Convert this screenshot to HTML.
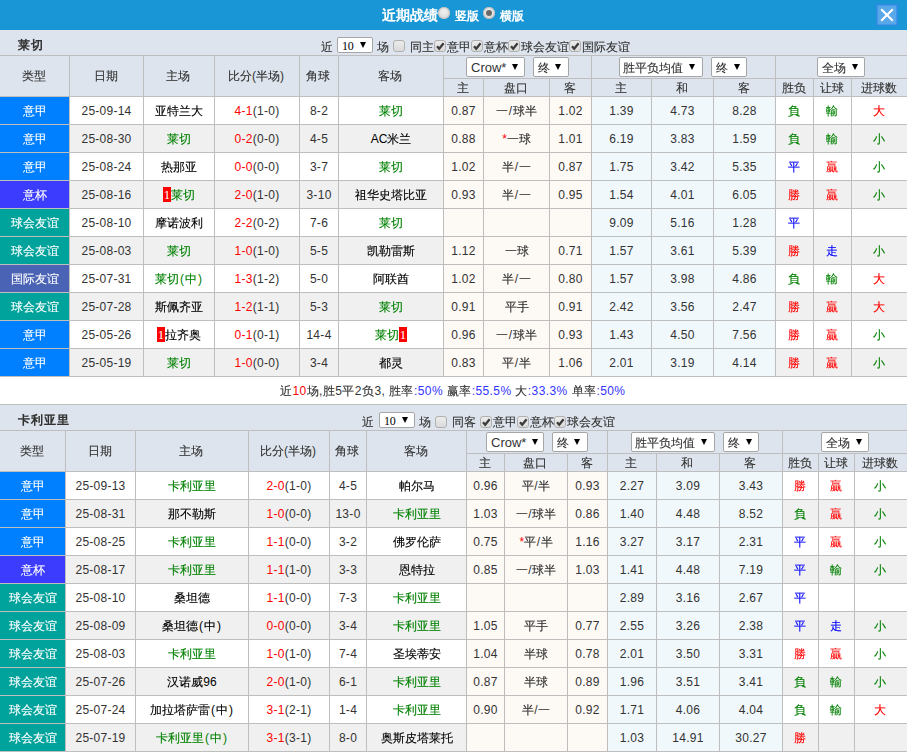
<!DOCTYPE html>
<html><head><meta charset="utf-8"><style>
html,body{margin:0;padding:0;width:907px;height:752px;overflow:hidden;background:#fff}
body{position:relative;font-family:"Liberation Sans", sans-serif;font-size:12px}
body>div{position:absolute}
.rc{display:inline-block;background:#f00;color:#fff;font-family:'Liberation Serif';width:8px;height:15px;line-height:16px;text-align:center;vertical-align:top;position:relative;top:5px;font-size:13px}
.k{filter:url(#th)}
</style></head><body>
<svg width="0" height="0" style="position:absolute"><filter id="th" x="0" y="0" width="100%" height="100%"><feComponentTransfer><feFuncA type="gamma" amplitude="1" exponent="0.75" offset="0"/></feComponentTransfer></filter></svg>
<div style="left:0px;top:0px;width:907px;height:30px;background:#1996d5"></div><div style="left:382px;top:0px;width:200px;height:30px;color:#fff;line-height:30px;white-space:nowrap;font-weight:bold;font-size:14px"><span class="k">近期战绩</span></div><div style="left:438px;top:7px;width:12px;height:12px;border-radius:50%;background:radial-gradient(circle at 50% 40%,#f2f2f2,#d0d0d0);box-shadow:inset 0 0 0 1px #bdbdbd"></div><div style="left:455px;top:2px;width:200px;height:28px;color:#fff;line-height:28px;white-space:nowrap;font-weight:bold"><span class="k">竖版</span></div><div style="left:483px;top:7px;width:12px;height:12px;border-radius:50%;background:radial-gradient(circle at 50% 40%,#f2f2f2,#d0d0d0);box-shadow:inset 0 0 0 1px #bdbdbd"><div style="position:absolute;left:3px;top:3px;width:6px;height:6px;border-radius:50%;background:#6a6a6a"></div></div><div style="left:500px;top:2px;width:200px;height:28px;color:#fff;line-height:28px;white-space:nowrap;font-weight:bold"><span class="k">横版</span></div><div style="left:876px;top:4px;width:22px;height:22px;background:#5aa8ea;box-shadow:inset 0 0 0 1.6px #2f8ae4"><svg width="22" height="22" style="position:absolute;left:0;top:0"><path d="M5.2 5.2 L16.8 16.8 M16.8 5.2 L5.2 16.8" stroke="#fff" stroke-width="2.1"/></svg></div><div style="left:0px;top:30px;width:907px;height:25px;background:#dde4ed"></div><div style="left:18px;top:33px;width:200px;height:25px;color:#333;line-height:25px;white-space:nowrap;font-weight:bold;letter-spacing:1px"><span class="k">莱切</span></div><div style="left:321px;top:35px;width:200px;height:25px;color:#333;line-height:25px;white-space:nowrap;"><span class="k">近</span></div><div style="left:337px;top:37px;width:36px;height:16px;background:#fff;border:1px solid #a6a6a6;border-radius:2px;box-sizing:border-box"></div><div style="left:342px;top:38px;width:200px;height:16px;color:#333;line-height:16px;white-space:nowrap;"><span style="font-family:'Liberation Serif';font-size:12px;letter-spacing:-0.3px;color:#000">10</span></div><div style="left:360px;top:42px;width:0px;height:0px;border-left:3px solid transparent;border-right:3px solid transparent;border-top:6px solid #000"></div><div style="left:377px;top:35px;width:200px;height:25px;color:#333;line-height:25px;white-space:nowrap;"><span class="k">场</span></div><div style="left:393px;top:40px;width:12px;height:12px;background:linear-gradient(#ececec,#dadada);border:1px solid #b0b0b0;border-radius:3px;box-sizing:border-box"></div><div style="left:410px;top:35px;width:200px;height:25px;color:#333;line-height:25px;white-space:nowrap;"><span class="k">同主</span></div><div style="left:434px;top:40px;width:12px;height:12px;background:linear-gradient(#ececec,#dadada);border:1px solid #b0b0b0;border-radius:3px;box-sizing:border-box"><svg width="12" height="12" style="position:absolute;left:-1px;top:-1px"><path d="M3 6.3 L5.2 8.8 L9.6 3.2" stroke="#3c3c3c" stroke-width="2.3" fill="none"/></svg></div><div style="left:447px;top:35px;width:200px;height:25px;color:#333;line-height:25px;white-space:nowrap;"><span class="k">意甲</span></div><div style="left:471px;top:40px;width:12px;height:12px;background:linear-gradient(#ececec,#dadada);border:1px solid #b0b0b0;border-radius:3px;box-sizing:border-box"><svg width="12" height="12" style="position:absolute;left:-1px;top:-1px"><path d="M3 6.3 L5.2 8.8 L9.6 3.2" stroke="#3c3c3c" stroke-width="2.3" fill="none"/></svg></div><div style="left:484px;top:35px;width:200px;height:25px;color:#333;line-height:25px;white-space:nowrap;"><span class="k">意杯</span></div><div style="left:508px;top:40px;width:12px;height:12px;background:linear-gradient(#ececec,#dadada);border:1px solid #b0b0b0;border-radius:3px;box-sizing:border-box"><svg width="12" height="12" style="position:absolute;left:-1px;top:-1px"><path d="M3 6.3 L5.2 8.8 L9.6 3.2" stroke="#3c3c3c" stroke-width="2.3" fill="none"/></svg></div><div style="left:521px;top:35px;width:200px;height:25px;color:#333;line-height:25px;white-space:nowrap;"><span class="k">球会友谊</span></div><div style="left:569px;top:40px;width:12px;height:12px;background:linear-gradient(#ececec,#dadada);border:1px solid #b0b0b0;border-radius:3px;box-sizing:border-box"><svg width="12" height="12" style="position:absolute;left:-1px;top:-1px"><path d="M3 6.3 L5.2 8.8 L9.6 3.2" stroke="#3c3c3c" stroke-width="2.3" fill="none"/></svg></div><div style="left:582px;top:35px;width:200px;height:25px;color:#333;line-height:25px;white-space:nowrap;"><span class="k">国际友谊</span></div><div style="left:0px;top:55px;width:907px;height:41px;background:#dde4ed"></div><div style="left:0px;top:56px;width:68px;height:40px;color:#333;line-height:40px;text-align:center;white-space:nowrap;"><span class="k">类型</span></div><div style="left:69px;top:56px;width:73px;height:40px;color:#333;line-height:40px;text-align:center;white-space:nowrap;"><span class="k">日期</span></div><div style="left:143px;top:56px;width:70px;height:40px;color:#333;line-height:40px;text-align:center;white-space:nowrap;"><span class="k">主场</span></div><div style="left:214px;top:56px;width:84px;height:40px;color:#333;line-height:40px;text-align:center;white-space:nowrap;"><span class="k">比分</span>(<span class="k">半场</span>)</div><div style="left:299px;top:56px;width:38px;height:40px;color:#333;line-height:40px;text-align:center;white-space:nowrap;"><span class="k">角球</span></div><div style="left:338px;top:56px;width:104px;height:40px;color:#333;line-height:40px;text-align:center;white-space:nowrap;"><span class="k">客场</span></div><div style="left:443px;top:80px;width:39px;height:17px;color:#333;line-height:17px;text-align:center;white-space:nowrap;"><span class="k">主</span></div><div style="left:483px;top:80px;width:65px;height:17px;color:#333;line-height:17px;text-align:center;white-space:nowrap;"><span class="k">盘口</span></div><div style="left:549px;top:80px;width:41px;height:17px;color:#333;line-height:17px;text-align:center;white-space:nowrap;"><span class="k">客</span></div><div style="left:591px;top:80px;width:59px;height:17px;color:#333;line-height:17px;text-align:center;white-space:nowrap;"><span class="k">主</span></div><div style="left:651px;top:80px;width:61px;height:17px;color:#333;line-height:17px;text-align:center;white-space:nowrap;"><span class="k">和</span></div><div style="left:713px;top:80px;width:61px;height:17px;color:#333;line-height:17px;text-align:center;white-space:nowrap;"><span class="k">客</span></div><div style="left:775px;top:80px;width:37px;height:17px;color:#333;line-height:17px;text-align:center;white-space:nowrap;"><span class="k">胜负</span></div><div style="left:813px;top:80px;width:37px;height:17px;color:#333;line-height:17px;text-align:center;white-space:nowrap;"><span class="k">让球</span></div><div style="left:851px;top:80px;width:55px;height:17px;color:#333;line-height:17px;text-align:center;white-space:nowrap;"><span class="k">进球数</span></div><div style="left:0px;top:97px;width:907px;height:27px;background:#ffffff"></div><div style="left:0px;top:97px;width:69px;height:27px;background:#0080ff"></div><div style="left:444px;top:97px;width:147px;height:27px;background:#fdf9f5"></div><div style="left:592px;top:97px;width:183px;height:27px;background:#f0f8fc"></div><div style="left:0px;top:98px;width:69px;height:27px;color:#fff;line-height:27px;text-align:center;white-space:nowrap;"><span class="k">意甲</span></div><div style="left:70px;top:98px;width:73px;height:27px;color:#333;line-height:27px;text-align:center;white-space:nowrap;letter-spacing:0.25px">25-09-14</div><div style="left:144px;top:98px;width:70px;height:27px;color:#000;line-height:27px;text-align:center;white-space:nowrap;"><span style="color:#000"><span class="k">亚特兰大</span></span></div><div style="left:215px;top:98px;width:84px;height:27px;color:#333;line-height:27px;text-align:center;white-space:nowrap;letter-spacing:0.3px"><span style="color:#ff0000">4-1</span>(1-0)</div><div style="left:300px;top:98px;width:38px;height:27px;color:#333;line-height:27px;text-align:center;white-space:nowrap;letter-spacing:0.3px">8-2</div><div style="left:339px;top:98px;width:104px;height:27px;color:#000;line-height:27px;text-align:center;white-space:nowrap;"><span style="color:#008000"><span class="k">莱切</span></span></div><div style="left:444px;top:98px;width:39px;height:27px;color:#333;line-height:27px;text-align:center;white-space:nowrap;letter-spacing:0.3px">0.87</div><div style="left:484px;top:98px;width:65px;height:27px;color:#333;line-height:27px;text-align:center;white-space:nowrap;"><span class="k">一</span><span style="padding:0 0.6px">/</span><span class="k">球半</span></div><div style="left:550px;top:98px;width:41px;height:27px;color:#333;line-height:27px;text-align:center;white-space:nowrap;letter-spacing:0.3px">1.02</div><div style="left:592px;top:98px;width:59px;height:27px;color:#333;line-height:27px;text-align:center;white-space:nowrap;letter-spacing:0.3px">1.39</div><div style="left:652px;top:98px;width:61px;height:27px;color:#333;line-height:27px;text-align:center;white-space:nowrap;letter-spacing:0.3px">4.73</div><div style="left:714px;top:98px;width:61px;height:27px;color:#333;line-height:27px;text-align:center;white-space:nowrap;letter-spacing:0.3px">8.28</div><div style="left:775px;top:98px;width:37px;height:27px;color:#008000;line-height:27px;text-align:center;white-space:nowrap;"><span class="k">負</span></div><div style="left:813px;top:98px;width:37px;height:27px;color:#008000;line-height:27px;text-align:center;white-space:nowrap;"><span class="k">輸</span></div><div style="left:851px;top:98px;width:55px;height:27px;color:#ff0000;line-height:27px;text-align:center;white-space:nowrap;"><span class="k">大</span></div><div style="left:0px;top:124px;width:907px;height:1px;background:#bebebe"></div><div style="left:0px;top:125px;width:907px;height:27px;background:#f0f0f0"></div><div style="left:0px;top:125px;width:69px;height:27px;background:#0080ff"></div><div style="left:444px;top:125px;width:147px;height:27px;background:#fdf9f5"></div><div style="left:592px;top:125px;width:183px;height:27px;background:#f0f8fc"></div><div style="left:0px;top:126px;width:69px;height:27px;color:#fff;line-height:27px;text-align:center;white-space:nowrap;"><span class="k">意甲</span></div><div style="left:70px;top:126px;width:73px;height:27px;color:#333;line-height:27px;text-align:center;white-space:nowrap;letter-spacing:0.25px">25-08-30</div><div style="left:144px;top:126px;width:70px;height:27px;color:#000;line-height:27px;text-align:center;white-space:nowrap;"><span style="color:#008000"><span class="k">莱切</span></span></div><div style="left:215px;top:126px;width:84px;height:27px;color:#333;line-height:27px;text-align:center;white-space:nowrap;letter-spacing:0.3px"><span style="color:#ff0000">0-2</span>(0-0)</div><div style="left:300px;top:126px;width:38px;height:27px;color:#333;line-height:27px;text-align:center;white-space:nowrap;letter-spacing:0.3px">4-5</div><div style="left:339px;top:126px;width:104px;height:27px;color:#000;line-height:27px;text-align:center;white-space:nowrap;"><span style="color:#000">AC<span class="k">米兰</span></span></div><div style="left:444px;top:126px;width:39px;height:27px;color:#333;line-height:27px;text-align:center;white-space:nowrap;letter-spacing:0.3px">0.88</div><div style="left:484px;top:126px;width:65px;height:27px;color:#333;line-height:27px;text-align:center;white-space:nowrap;"><span style="color:red">*</span><span class="k">一球</span></div><div style="left:550px;top:126px;width:41px;height:27px;color:#333;line-height:27px;text-align:center;white-space:nowrap;letter-spacing:0.3px">1.01</div><div style="left:592px;top:126px;width:59px;height:27px;color:#333;line-height:27px;text-align:center;white-space:nowrap;letter-spacing:0.3px">6.19</div><div style="left:652px;top:126px;width:61px;height:27px;color:#333;line-height:27px;text-align:center;white-space:nowrap;letter-spacing:0.3px">3.83</div><div style="left:714px;top:126px;width:61px;height:27px;color:#333;line-height:27px;text-align:center;white-space:nowrap;letter-spacing:0.3px">1.59</div><div style="left:775px;top:126px;width:37px;height:27px;color:#008000;line-height:27px;text-align:center;white-space:nowrap;"><span class="k">負</span></div><div style="left:813px;top:126px;width:37px;height:27px;color:#008000;line-height:27px;text-align:center;white-space:nowrap;"><span class="k">輸</span></div><div style="left:851px;top:126px;width:55px;height:27px;color:#008000;line-height:27px;text-align:center;white-space:nowrap;"><span class="k">小</span></div><div style="left:0px;top:152px;width:907px;height:1px;background:#bebebe"></div><div style="left:0px;top:153px;width:907px;height:27px;background:#ffffff"></div><div style="left:0px;top:153px;width:69px;height:27px;background:#0080ff"></div><div style="left:444px;top:153px;width:147px;height:27px;background:#fdf9f5"></div><div style="left:592px;top:153px;width:183px;height:27px;background:#f0f8fc"></div><div style="left:0px;top:154px;width:69px;height:27px;color:#fff;line-height:27px;text-align:center;white-space:nowrap;"><span class="k">意甲</span></div><div style="left:70px;top:154px;width:73px;height:27px;color:#333;line-height:27px;text-align:center;white-space:nowrap;letter-spacing:0.25px">25-08-24</div><div style="left:144px;top:154px;width:70px;height:27px;color:#000;line-height:27px;text-align:center;white-space:nowrap;"><span style="color:#000"><span class="k">热那亚</span></span></div><div style="left:215px;top:154px;width:84px;height:27px;color:#333;line-height:27px;text-align:center;white-space:nowrap;letter-spacing:0.3px"><span style="color:#ff0000">0-0</span>(0-0)</div><div style="left:300px;top:154px;width:38px;height:27px;color:#333;line-height:27px;text-align:center;white-space:nowrap;letter-spacing:0.3px">3-7</div><div style="left:339px;top:154px;width:104px;height:27px;color:#000;line-height:27px;text-align:center;white-space:nowrap;"><span style="color:#008000"><span class="k">莱切</span></span></div><div style="left:444px;top:154px;width:39px;height:27px;color:#333;line-height:27px;text-align:center;white-space:nowrap;letter-spacing:0.3px">1.02</div><div style="left:484px;top:154px;width:65px;height:27px;color:#333;line-height:27px;text-align:center;white-space:nowrap;"><span class="k">半</span><span style="padding:0 0.6px">/</span><span class="k">一</span></div><div style="left:550px;top:154px;width:41px;height:27px;color:#333;line-height:27px;text-align:center;white-space:nowrap;letter-spacing:0.3px">0.87</div><div style="left:592px;top:154px;width:59px;height:27px;color:#333;line-height:27px;text-align:center;white-space:nowrap;letter-spacing:0.3px">1.75</div><div style="left:652px;top:154px;width:61px;height:27px;color:#333;line-height:27px;text-align:center;white-space:nowrap;letter-spacing:0.3px">3.42</div><div style="left:714px;top:154px;width:61px;height:27px;color:#333;line-height:27px;text-align:center;white-space:nowrap;letter-spacing:0.3px">5.35</div><div style="left:775px;top:154px;width:37px;height:27px;color:#0000ff;line-height:27px;text-align:center;white-space:nowrap;"><span class="k">平</span></div><div style="left:813px;top:154px;width:37px;height:27px;color:#ff0000;line-height:27px;text-align:center;white-space:nowrap;"><span class="k">贏</span></div><div style="left:851px;top:154px;width:55px;height:27px;color:#008000;line-height:27px;text-align:center;white-space:nowrap;"><span class="k">小</span></div><div style="left:0px;top:180px;width:907px;height:1px;background:#bebebe"></div><div style="left:0px;top:181px;width:907px;height:27px;background:#f0f0f0"></div><div style="left:0px;top:181px;width:69px;height:27px;background:#3c3cff"></div><div style="left:444px;top:181px;width:147px;height:27px;background:#fdf9f5"></div><div style="left:592px;top:181px;width:183px;height:27px;background:#f0f8fc"></div><div style="left:0px;top:182px;width:69px;height:27px;color:#fff;line-height:27px;text-align:center;white-space:nowrap;"><span class="k">意杯</span></div><div style="left:70px;top:182px;width:73px;height:27px;color:#333;line-height:27px;text-align:center;white-space:nowrap;letter-spacing:0.25px">25-08-16</div><div style="left:144px;top:182px;width:70px;height:27px;color:#000;line-height:27px;text-align:center;white-space:nowrap;"><span class="rc">1</span><span style="color:#008000"><span class="k">莱切</span></span></div><div style="left:215px;top:182px;width:84px;height:27px;color:#333;line-height:27px;text-align:center;white-space:nowrap;letter-spacing:0.3px"><span style="color:#ff0000">2-0</span>(1-0)</div><div style="left:300px;top:182px;width:38px;height:27px;color:#333;line-height:27px;text-align:center;white-space:nowrap;letter-spacing:0.3px">3-10</div><div style="left:339px;top:182px;width:104px;height:27px;color:#000;line-height:27px;text-align:center;white-space:nowrap;"><span style="color:#000"><span class="k">祖华史塔比亚</span></span></div><div style="left:444px;top:182px;width:39px;height:27px;color:#333;line-height:27px;text-align:center;white-space:nowrap;letter-spacing:0.3px">0.93</div><div style="left:484px;top:182px;width:65px;height:27px;color:#333;line-height:27px;text-align:center;white-space:nowrap;"><span class="k">半</span><span style="padding:0 0.6px">/</span><span class="k">一</span></div><div style="left:550px;top:182px;width:41px;height:27px;color:#333;line-height:27px;text-align:center;white-space:nowrap;letter-spacing:0.3px">0.95</div><div style="left:592px;top:182px;width:59px;height:27px;color:#333;line-height:27px;text-align:center;white-space:nowrap;letter-spacing:0.3px">1.54</div><div style="left:652px;top:182px;width:61px;height:27px;color:#333;line-height:27px;text-align:center;white-space:nowrap;letter-spacing:0.3px">4.01</div><div style="left:714px;top:182px;width:61px;height:27px;color:#333;line-height:27px;text-align:center;white-space:nowrap;letter-spacing:0.3px">6.05</div><div style="left:775px;top:182px;width:37px;height:27px;color:#ff0000;line-height:27px;text-align:center;white-space:nowrap;"><span class="k">勝</span></div><div style="left:813px;top:182px;width:37px;height:27px;color:#ff0000;line-height:27px;text-align:center;white-space:nowrap;"><span class="k">贏</span></div><div style="left:851px;top:182px;width:55px;height:27px;color:#008000;line-height:27px;text-align:center;white-space:nowrap;"><span class="k">小</span></div><div style="left:0px;top:208px;width:907px;height:1px;background:#bebebe"></div><div style="left:0px;top:209px;width:907px;height:27px;background:#ffffff"></div><div style="left:0px;top:209px;width:69px;height:27px;background:#00a39c"></div><div style="left:444px;top:209px;width:147px;height:27px;background:#fdf9f5"></div><div style="left:592px;top:209px;width:183px;height:27px;background:#f0f8fc"></div><div style="left:0px;top:210px;width:69px;height:27px;color:#fff;line-height:27px;text-align:center;white-space:nowrap;"><span class="k">球会友谊</span></div><div style="left:70px;top:210px;width:73px;height:27px;color:#333;line-height:27px;text-align:center;white-space:nowrap;letter-spacing:0.25px">25-08-10</div><div style="left:144px;top:210px;width:70px;height:27px;color:#000;line-height:27px;text-align:center;white-space:nowrap;"><span style="color:#000"><span class="k">摩诺波利</span></span></div><div style="left:215px;top:210px;width:84px;height:27px;color:#333;line-height:27px;text-align:center;white-space:nowrap;letter-spacing:0.3px"><span style="color:#ff0000">2-2</span>(0-2)</div><div style="left:300px;top:210px;width:38px;height:27px;color:#333;line-height:27px;text-align:center;white-space:nowrap;letter-spacing:0.3px">7-6</div><div style="left:339px;top:210px;width:104px;height:27px;color:#000;line-height:27px;text-align:center;white-space:nowrap;"><span style="color:#008000"><span class="k">莱切</span></span></div><div style="left:444px;top:210px;width:39px;height:27px;color:#333;line-height:27px;text-align:center;white-space:nowrap;letter-spacing:0.3px"></div><div style="left:484px;top:210px;width:65px;height:27px;color:#333;line-height:27px;text-align:center;white-space:nowrap;"></div><div style="left:550px;top:210px;width:41px;height:27px;color:#333;line-height:27px;text-align:center;white-space:nowrap;letter-spacing:0.3px"></div><div style="left:592px;top:210px;width:59px;height:27px;color:#333;line-height:27px;text-align:center;white-space:nowrap;letter-spacing:0.3px">9.09</div><div style="left:652px;top:210px;width:61px;height:27px;color:#333;line-height:27px;text-align:center;white-space:nowrap;letter-spacing:0.3px">5.16</div><div style="left:714px;top:210px;width:61px;height:27px;color:#333;line-height:27px;text-align:center;white-space:nowrap;letter-spacing:0.3px">1.28</div><div style="left:775px;top:210px;width:37px;height:27px;color:#0000ff;line-height:27px;text-align:center;white-space:nowrap;"><span class="k">平</span></div><div style="left:813px;top:210px;width:37px;height:27px;color:#333;line-height:27px;text-align:center;white-space:nowrap;"></div><div style="left:851px;top:210px;width:55px;height:27px;color:#333;line-height:27px;text-align:center;white-space:nowrap;"></div><div style="left:0px;top:236px;width:907px;height:1px;background:#bebebe"></div><div style="left:0px;top:237px;width:907px;height:27px;background:#f0f0f0"></div><div style="left:0px;top:237px;width:69px;height:27px;background:#00a39c"></div><div style="left:444px;top:237px;width:147px;height:27px;background:#fdf9f5"></div><div style="left:592px;top:237px;width:183px;height:27px;background:#f0f8fc"></div><div style="left:0px;top:238px;width:69px;height:27px;color:#fff;line-height:27px;text-align:center;white-space:nowrap;"><span class="k">球会友谊</span></div><div style="left:70px;top:238px;width:73px;height:27px;color:#333;line-height:27px;text-align:center;white-space:nowrap;letter-spacing:0.25px">25-08-03</div><div style="left:144px;top:238px;width:70px;height:27px;color:#000;line-height:27px;text-align:center;white-space:nowrap;"><span style="color:#008000"><span class="k">莱切</span></span></div><div style="left:215px;top:238px;width:84px;height:27px;color:#333;line-height:27px;text-align:center;white-space:nowrap;letter-spacing:0.3px"><span style="color:#ff0000">1-0</span>(1-0)</div><div style="left:300px;top:238px;width:38px;height:27px;color:#333;line-height:27px;text-align:center;white-space:nowrap;letter-spacing:0.3px">5-5</div><div style="left:339px;top:238px;width:104px;height:27px;color:#000;line-height:27px;text-align:center;white-space:nowrap;"><span style="color:#000"><span class="k">凯勒雷斯</span></span></div><div style="left:444px;top:238px;width:39px;height:27px;color:#333;line-height:27px;text-align:center;white-space:nowrap;letter-spacing:0.3px">1.12</div><div style="left:484px;top:238px;width:65px;height:27px;color:#333;line-height:27px;text-align:center;white-space:nowrap;"><span class="k">一球</span></div><div style="left:550px;top:238px;width:41px;height:27px;color:#333;line-height:27px;text-align:center;white-space:nowrap;letter-spacing:0.3px">0.71</div><div style="left:592px;top:238px;width:59px;height:27px;color:#333;line-height:27px;text-align:center;white-space:nowrap;letter-spacing:0.3px">1.57</div><div style="left:652px;top:238px;width:61px;height:27px;color:#333;line-height:27px;text-align:center;white-space:nowrap;letter-spacing:0.3px">3.61</div><div style="left:714px;top:238px;width:61px;height:27px;color:#333;line-height:27px;text-align:center;white-space:nowrap;letter-spacing:0.3px">5.39</div><div style="left:775px;top:238px;width:37px;height:27px;color:#ff0000;line-height:27px;text-align:center;white-space:nowrap;"><span class="k">勝</span></div><div style="left:813px;top:238px;width:37px;height:27px;color:#0000ff;line-height:27px;text-align:center;white-space:nowrap;"><span class="k">走</span></div><div style="left:851px;top:238px;width:55px;height:27px;color:#008000;line-height:27px;text-align:center;white-space:nowrap;"><span class="k">小</span></div><div style="left:0px;top:264px;width:907px;height:1px;background:#bebebe"></div><div style="left:0px;top:265px;width:907px;height:27px;background:#ffffff"></div><div style="left:0px;top:265px;width:69px;height:27px;background:#4b63b5"></div><div style="left:444px;top:265px;width:147px;height:27px;background:#fdf9f5"></div><div style="left:592px;top:265px;width:183px;height:27px;background:#f0f8fc"></div><div style="left:0px;top:266px;width:69px;height:27px;color:#fff;line-height:27px;text-align:center;white-space:nowrap;"><span class="k">国际友谊</span></div><div style="left:70px;top:266px;width:73px;height:27px;color:#333;line-height:27px;text-align:center;white-space:nowrap;letter-spacing:0.25px">25-07-31</div><div style="left:144px;top:266px;width:70px;height:27px;color:#000;line-height:27px;text-align:center;white-space:nowrap;"><span style="color:#008000"><span class="k">莱切</span><span style="padding:0 1px">(</span><span class="k">中</span><span style="padding:0 1px">)</span></span></div><div style="left:215px;top:266px;width:84px;height:27px;color:#333;line-height:27px;text-align:center;white-space:nowrap;letter-spacing:0.3px"><span style="color:#ff0000">1-3</span>(1-2)</div><div style="left:300px;top:266px;width:38px;height:27px;color:#333;line-height:27px;text-align:center;white-space:nowrap;letter-spacing:0.3px">5-0</div><div style="left:339px;top:266px;width:104px;height:27px;color:#000;line-height:27px;text-align:center;white-space:nowrap;"><span style="color:#000"><span class="k">阿联酋</span></span></div><div style="left:444px;top:266px;width:39px;height:27px;color:#333;line-height:27px;text-align:center;white-space:nowrap;letter-spacing:0.3px">1.02</div><div style="left:484px;top:266px;width:65px;height:27px;color:#333;line-height:27px;text-align:center;white-space:nowrap;"><span class="k">半</span><span style="padding:0 0.6px">/</span><span class="k">一</span></div><div style="left:550px;top:266px;width:41px;height:27px;color:#333;line-height:27px;text-align:center;white-space:nowrap;letter-spacing:0.3px">0.80</div><div style="left:592px;top:266px;width:59px;height:27px;color:#333;line-height:27px;text-align:center;white-space:nowrap;letter-spacing:0.3px">1.57</div><div style="left:652px;top:266px;width:61px;height:27px;color:#333;line-height:27px;text-align:center;white-space:nowrap;letter-spacing:0.3px">3.98</div><div style="left:714px;top:266px;width:61px;height:27px;color:#333;line-height:27px;text-align:center;white-space:nowrap;letter-spacing:0.3px">4.86</div><div style="left:775px;top:266px;width:37px;height:27px;color:#008000;line-height:27px;text-align:center;white-space:nowrap;"><span class="k">負</span></div><div style="left:813px;top:266px;width:37px;height:27px;color:#008000;line-height:27px;text-align:center;white-space:nowrap;"><span class="k">輸</span></div><div style="left:851px;top:266px;width:55px;height:27px;color:#ff0000;line-height:27px;text-align:center;white-space:nowrap;"><span class="k">大</span></div><div style="left:0px;top:292px;width:907px;height:1px;background:#bebebe"></div><div style="left:0px;top:293px;width:907px;height:27px;background:#f0f0f0"></div><div style="left:0px;top:293px;width:69px;height:27px;background:#00a39c"></div><div style="left:444px;top:293px;width:147px;height:27px;background:#fdf9f5"></div><div style="left:592px;top:293px;width:183px;height:27px;background:#f0f8fc"></div><div style="left:0px;top:294px;width:69px;height:27px;color:#fff;line-height:27px;text-align:center;white-space:nowrap;"><span class="k">球会友谊</span></div><div style="left:70px;top:294px;width:73px;height:27px;color:#333;line-height:27px;text-align:center;white-space:nowrap;letter-spacing:0.25px">25-07-28</div><div style="left:144px;top:294px;width:70px;height:27px;color:#000;line-height:27px;text-align:center;white-space:nowrap;"><span style="color:#000"><span class="k">斯佩齐亚</span></span></div><div style="left:215px;top:294px;width:84px;height:27px;color:#333;line-height:27px;text-align:center;white-space:nowrap;letter-spacing:0.3px"><span style="color:#ff0000">1-2</span>(1-1)</div><div style="left:300px;top:294px;width:38px;height:27px;color:#333;line-height:27px;text-align:center;white-space:nowrap;letter-spacing:0.3px">5-3</div><div style="left:339px;top:294px;width:104px;height:27px;color:#000;line-height:27px;text-align:center;white-space:nowrap;"><span style="color:#008000"><span class="k">莱切</span></span></div><div style="left:444px;top:294px;width:39px;height:27px;color:#333;line-height:27px;text-align:center;white-space:nowrap;letter-spacing:0.3px">0.91</div><div style="left:484px;top:294px;width:65px;height:27px;color:#333;line-height:27px;text-align:center;white-space:nowrap;"><span class="k">平手</span></div><div style="left:550px;top:294px;width:41px;height:27px;color:#333;line-height:27px;text-align:center;white-space:nowrap;letter-spacing:0.3px">0.91</div><div style="left:592px;top:294px;width:59px;height:27px;color:#333;line-height:27px;text-align:center;white-space:nowrap;letter-spacing:0.3px">2.42</div><div style="left:652px;top:294px;width:61px;height:27px;color:#333;line-height:27px;text-align:center;white-space:nowrap;letter-spacing:0.3px">3.56</div><div style="left:714px;top:294px;width:61px;height:27px;color:#333;line-height:27px;text-align:center;white-space:nowrap;letter-spacing:0.3px">2.47</div><div style="left:775px;top:294px;width:37px;height:27px;color:#ff0000;line-height:27px;text-align:center;white-space:nowrap;"><span class="k">勝</span></div><div style="left:813px;top:294px;width:37px;height:27px;color:#ff0000;line-height:27px;text-align:center;white-space:nowrap;"><span class="k">贏</span></div><div style="left:851px;top:294px;width:55px;height:27px;color:#ff0000;line-height:27px;text-align:center;white-space:nowrap;"><span class="k">大</span></div><div style="left:0px;top:320px;width:907px;height:1px;background:#bebebe"></div><div style="left:0px;top:321px;width:907px;height:27px;background:#ffffff"></div><div style="left:0px;top:321px;width:69px;height:27px;background:#0080ff"></div><div style="left:444px;top:321px;width:147px;height:27px;background:#fdf9f5"></div><div style="left:592px;top:321px;width:183px;height:27px;background:#f0f8fc"></div><div style="left:0px;top:322px;width:69px;height:27px;color:#fff;line-height:27px;text-align:center;white-space:nowrap;"><span class="k">意甲</span></div><div style="left:70px;top:322px;width:73px;height:27px;color:#333;line-height:27px;text-align:center;white-space:nowrap;letter-spacing:0.25px">25-05-26</div><div style="left:144px;top:322px;width:70px;height:27px;color:#000;line-height:27px;text-align:center;white-space:nowrap;"><span class="rc">1</span><span style="color:#000"><span class="k">拉齐奥</span></span></div><div style="left:215px;top:322px;width:84px;height:27px;color:#333;line-height:27px;text-align:center;white-space:nowrap;letter-spacing:0.3px"><span style="color:#ff0000">0-1</span>(0-1)</div><div style="left:300px;top:322px;width:38px;height:27px;color:#333;line-height:27px;text-align:center;white-space:nowrap;letter-spacing:0.3px">14-4</div><div style="left:339px;top:322px;width:104px;height:27px;color:#000;line-height:27px;text-align:center;white-space:nowrap;"><span style="color:#008000"><span class="k">莱切</span></span><span class="rc">1</span></div><div style="left:444px;top:322px;width:39px;height:27px;color:#333;line-height:27px;text-align:center;white-space:nowrap;letter-spacing:0.3px">0.96</div><div style="left:484px;top:322px;width:65px;height:27px;color:#333;line-height:27px;text-align:center;white-space:nowrap;"><span class="k">一</span><span style="padding:0 0.6px">/</span><span class="k">球半</span></div><div style="left:550px;top:322px;width:41px;height:27px;color:#333;line-height:27px;text-align:center;white-space:nowrap;letter-spacing:0.3px">0.93</div><div style="left:592px;top:322px;width:59px;height:27px;color:#333;line-height:27px;text-align:center;white-space:nowrap;letter-spacing:0.3px">1.43</div><div style="left:652px;top:322px;width:61px;height:27px;color:#333;line-height:27px;text-align:center;white-space:nowrap;letter-spacing:0.3px">4.50</div><div style="left:714px;top:322px;width:61px;height:27px;color:#333;line-height:27px;text-align:center;white-space:nowrap;letter-spacing:0.3px">7.56</div><div style="left:775px;top:322px;width:37px;height:27px;color:#ff0000;line-height:27px;text-align:center;white-space:nowrap;"><span class="k">勝</span></div><div style="left:813px;top:322px;width:37px;height:27px;color:#ff0000;line-height:27px;text-align:center;white-space:nowrap;"><span class="k">贏</span></div><div style="left:851px;top:322px;width:55px;height:27px;color:#008000;line-height:27px;text-align:center;white-space:nowrap;"><span class="k">小</span></div><div style="left:0px;top:348px;width:907px;height:1px;background:#bebebe"></div><div style="left:0px;top:349px;width:907px;height:27px;background:#f0f0f0"></div><div style="left:0px;top:349px;width:69px;height:27px;background:#0080ff"></div><div style="left:444px;top:349px;width:147px;height:27px;background:#fdf9f5"></div><div style="left:592px;top:349px;width:183px;height:27px;background:#f0f8fc"></div><div style="left:0px;top:350px;width:69px;height:27px;color:#fff;line-height:27px;text-align:center;white-space:nowrap;"><span class="k">意甲</span></div><div style="left:70px;top:350px;width:73px;height:27px;color:#333;line-height:27px;text-align:center;white-space:nowrap;letter-spacing:0.25px">25-05-19</div><div style="left:144px;top:350px;width:70px;height:27px;color:#000;line-height:27px;text-align:center;white-space:nowrap;"><span style="color:#008000"><span class="k">莱切</span></span></div><div style="left:215px;top:350px;width:84px;height:27px;color:#333;line-height:27px;text-align:center;white-space:nowrap;letter-spacing:0.3px"><span style="color:#ff0000">1-0</span>(0-0)</div><div style="left:300px;top:350px;width:38px;height:27px;color:#333;line-height:27px;text-align:center;white-space:nowrap;letter-spacing:0.3px">3-4</div><div style="left:339px;top:350px;width:104px;height:27px;color:#000;line-height:27px;text-align:center;white-space:nowrap;"><span style="color:#000"><span class="k">都灵</span></span></div><div style="left:444px;top:350px;width:39px;height:27px;color:#333;line-height:27px;text-align:center;white-space:nowrap;letter-spacing:0.3px">0.83</div><div style="left:484px;top:350px;width:65px;height:27px;color:#333;line-height:27px;text-align:center;white-space:nowrap;"><span class="k">平</span><span style="padding:0 0.6px">/</span><span class="k">半</span></div><div style="left:550px;top:350px;width:41px;height:27px;color:#333;line-height:27px;text-align:center;white-space:nowrap;letter-spacing:0.3px">1.06</div><div style="left:592px;top:350px;width:59px;height:27px;color:#333;line-height:27px;text-align:center;white-space:nowrap;letter-spacing:0.3px">2.01</div><div style="left:652px;top:350px;width:61px;height:27px;color:#333;line-height:27px;text-align:center;white-space:nowrap;letter-spacing:0.3px">3.19</div><div style="left:714px;top:350px;width:61px;height:27px;color:#333;line-height:27px;text-align:center;white-space:nowrap;letter-spacing:0.3px">4.14</div><div style="left:775px;top:350px;width:37px;height:27px;color:#ff0000;line-height:27px;text-align:center;white-space:nowrap;"><span class="k">勝</span></div><div style="left:813px;top:350px;width:37px;height:27px;color:#ff0000;line-height:27px;text-align:center;white-space:nowrap;"><span class="k">贏</span></div><div style="left:851px;top:350px;width:55px;height:27px;color:#008000;line-height:27px;text-align:center;white-space:nowrap;"><span class="k">小</span></div><div style="left:0px;top:376px;width:907px;height:1px;background:#bebebe"></div><div style="left:0px;top:55px;width:907px;height:1px;background:#bebebe"></div><div style="left:0px;top:96px;width:907px;height:1px;background:#bebebe"></div><div style="left:443px;top:78px;width:464px;height:1px;background:#bebebe"></div><div style="left:69px;top:55px;width:1px;height:322px;background:#bebebe"></div><div style="left:143px;top:55px;width:1px;height:322px;background:#bebebe"></div><div style="left:214px;top:55px;width:1px;height:322px;background:#bebebe"></div><div style="left:299px;top:55px;width:1px;height:322px;background:#bebebe"></div><div style="left:338px;top:55px;width:1px;height:322px;background:#bebebe"></div><div style="left:443px;top:55px;width:1px;height:322px;background:#bebebe"></div><div style="left:483px;top:78px;width:1px;height:299px;background:#bebebe"></div><div style="left:549px;top:78px;width:1px;height:299px;background:#bebebe"></div><div style="left:591px;top:55px;width:1px;height:322px;background:#bebebe"></div><div style="left:651px;top:78px;width:1px;height:299px;background:#bebebe"></div><div style="left:713px;top:78px;width:1px;height:299px;background:#bebebe"></div><div style="left:775px;top:55px;width:1px;height:322px;background:#bebebe"></div><div style="left:813px;top:78px;width:1px;height:299px;background:#bebebe"></div><div style="left:851px;top:78px;width:1px;height:299px;background:#bebebe"></div><div style="left:0px;top:377px;width:907px;height:27px;background:#fff"></div><div style="left:280px;top:378px;width:400px;height:27px;color:#333;line-height:27px;white-space:nowrap;letter-spacing:0.43px"><span class="k">近</span><span style="color:red">10</span><span class="k">场</span>,<span class="k">胜</span>5<span class="k">平</span>2<span class="k">负</span>3, <span class="k">胜率</span><span style="color:#3333ff">:50%</span> <span class="k">赢率</span><span style="color:#3333ff">:55.5%</span> <span class="k">大</span><span style="color:#3333ff">:33.3%</span> <span class="k">单率</span><span style="color:#3333ff">:50%</span></div><div style="left:0px;top:404px;width:907px;height:1px;background:#bebebe"></div><div style="left:0px;top:405px;width:907px;height:25px;background:#dde4ed"></div><div style="left:18px;top:408px;width:200px;height:25px;color:#333;line-height:25px;white-space:nowrap;font-weight:bold;letter-spacing:1px"><span class="k">卡利亚里</span></div><div style="left:362px;top:410px;width:200px;height:25px;color:#333;line-height:25px;white-space:nowrap;"><span class="k">近</span></div><div style="left:379px;top:412px;width:36px;height:16px;background:#fff;border:1px solid #a6a6a6;border-radius:2px;box-sizing:border-box"></div><div style="left:384px;top:413px;width:200px;height:16px;color:#333;line-height:16px;white-space:nowrap;"><span style="font-family:'Liberation Serif';font-size:12px;letter-spacing:-0.3px;color:#000">10</span></div><div style="left:402px;top:417px;width:0px;height:0px;border-left:3px solid transparent;border-right:3px solid transparent;border-top:6px solid #000"></div><div style="left:419px;top:410px;width:200px;height:25px;color:#333;line-height:25px;white-space:nowrap;"><span class="k">场</span></div><div style="left:435px;top:416px;width:12px;height:12px;background:linear-gradient(#ececec,#dadada);border:1px solid #b0b0b0;border-radius:3px;box-sizing:border-box"></div><div style="left:452px;top:410px;width:200px;height:25px;color:#333;line-height:25px;white-space:nowrap;"><span class="k">同客</span></div><div style="left:480px;top:416px;width:12px;height:12px;background:linear-gradient(#ececec,#dadada);border:1px solid #b0b0b0;border-radius:3px;box-sizing:border-box"><svg width="12" height="12" style="position:absolute;left:-1px;top:-1px"><path d="M3 6.3 L5.2 8.8 L9.6 3.2" stroke="#3c3c3c" stroke-width="2.3" fill="none"/></svg></div><div style="left:493px;top:410px;width:200px;height:25px;color:#333;line-height:25px;white-space:nowrap;"><span class="k">意甲</span></div><div style="left:517px;top:416px;width:12px;height:12px;background:linear-gradient(#ececec,#dadada);border:1px solid #b0b0b0;border-radius:3px;box-sizing:border-box"><svg width="12" height="12" style="position:absolute;left:-1px;top:-1px"><path d="M3 6.3 L5.2 8.8 L9.6 3.2" stroke="#3c3c3c" stroke-width="2.3" fill="none"/></svg></div><div style="left:530px;top:410px;width:200px;height:25px;color:#333;line-height:25px;white-space:nowrap;"><span class="k">意杯</span></div><div style="left:554px;top:416px;width:12px;height:12px;background:linear-gradient(#ececec,#dadada);border:1px solid #b0b0b0;border-radius:3px;box-sizing:border-box"><svg width="12" height="12" style="position:absolute;left:-1px;top:-1px"><path d="M3 6.3 L5.2 8.8 L9.6 3.2" stroke="#3c3c3c" stroke-width="2.3" fill="none"/></svg></div><div style="left:567px;top:410px;width:200px;height:25px;color:#333;line-height:25px;white-space:nowrap;"><span class="k">球会友谊</span></div><div style="left:0px;top:430px;width:907px;height:41px;background:#dde4ed"></div><div style="left:0px;top:431px;width:64px;height:40px;color:#333;line-height:40px;text-align:center;white-space:nowrap;"><span class="k">类型</span></div><div style="left:65px;top:431px;width:69px;height:40px;color:#333;line-height:40px;text-align:center;white-space:nowrap;"><span class="k">日期</span></div><div style="left:135px;top:431px;width:112px;height:40px;color:#333;line-height:40px;text-align:center;white-space:nowrap;"><span class="k">主场</span></div><div style="left:248px;top:431px;width:80px;height:40px;color:#333;line-height:40px;text-align:center;white-space:nowrap;"><span class="k">比分</span>(<span class="k">半场</span>)</div><div style="left:329px;top:431px;width:36px;height:40px;color:#333;line-height:40px;text-align:center;white-space:nowrap;"><span class="k">角球</span></div><div style="left:366px;top:431px;width:99px;height:40px;color:#333;line-height:40px;text-align:center;white-space:nowrap;"><span class="k">客场</span></div><div style="left:466px;top:455px;width:37px;height:17px;color:#333;line-height:17px;text-align:center;white-space:nowrap;"><span class="k">主</span></div><div style="left:504px;top:455px;width:62px;height:17px;color:#333;line-height:17px;text-align:center;white-space:nowrap;"><span class="k">盘口</span></div><div style="left:567px;top:455px;width:39px;height:17px;color:#333;line-height:17px;text-align:center;white-space:nowrap;"><span class="k">客</span></div><div style="left:607px;top:455px;width:48px;height:17px;color:#333;line-height:17px;text-align:center;white-space:nowrap;"><span class="k">主</span></div><div style="left:656px;top:455px;width:62px;height:17px;color:#333;line-height:17px;text-align:center;white-space:nowrap;"><span class="k">和</span></div><div style="left:719px;top:455px;width:62px;height:17px;color:#333;line-height:17px;text-align:center;white-space:nowrap;"><span class="k">客</span></div><div style="left:782px;top:455px;width:35px;height:17px;color:#333;line-height:17px;text-align:center;white-space:nowrap;"><span class="k">胜负</span></div><div style="left:818px;top:455px;width:35px;height:17px;color:#333;line-height:17px;text-align:center;white-space:nowrap;"><span class="k">让球</span></div><div style="left:854px;top:455px;width:52px;height:17px;color:#333;line-height:17px;text-align:center;white-space:nowrap;"><span class="k">进球数</span></div><div style="left:0px;top:472px;width:907px;height:27px;background:#ffffff"></div><div style="left:0px;top:472px;width:65px;height:27px;background:#0080ff"></div><div style="left:467px;top:472px;width:140px;height:27px;background:#fdf9f5"></div><div style="left:608px;top:472px;width:174px;height:27px;background:#f0f8fc"></div><div style="left:0px;top:473px;width:65px;height:27px;color:#fff;line-height:27px;text-align:center;white-space:nowrap;"><span class="k">意甲</span></div><div style="left:66px;top:473px;width:69px;height:27px;color:#333;line-height:27px;text-align:center;white-space:nowrap;letter-spacing:0.25px">25-09-13</div><div style="left:136px;top:473px;width:112px;height:27px;color:#000;line-height:27px;text-align:center;white-space:nowrap;"><span style="color:#008000"><span class="k">卡利亚里</span></span></div><div style="left:249px;top:473px;width:80px;height:27px;color:#333;line-height:27px;text-align:center;white-space:nowrap;letter-spacing:0.3px"><span style="color:#ff0000">2-0</span>(1-0)</div><div style="left:330px;top:473px;width:36px;height:27px;color:#333;line-height:27px;text-align:center;white-space:nowrap;letter-spacing:0.3px">4-5</div><div style="left:367px;top:473px;width:99px;height:27px;color:#000;line-height:27px;text-align:center;white-space:nowrap;"><span style="color:#000"><span class="k">帕尔马</span></span></div><div style="left:467px;top:473px;width:37px;height:27px;color:#333;line-height:27px;text-align:center;white-space:nowrap;letter-spacing:0.3px">0.96</div><div style="left:505px;top:473px;width:62px;height:27px;color:#333;line-height:27px;text-align:center;white-space:nowrap;"><span class="k">平</span><span style="padding:0 0.6px">/</span><span class="k">半</span></div><div style="left:568px;top:473px;width:39px;height:27px;color:#333;line-height:27px;text-align:center;white-space:nowrap;letter-spacing:0.3px">0.93</div><div style="left:608px;top:473px;width:48px;height:27px;color:#333;line-height:27px;text-align:center;white-space:nowrap;letter-spacing:0.3px">2.27</div><div style="left:657px;top:473px;width:62px;height:27px;color:#333;line-height:27px;text-align:center;white-space:nowrap;letter-spacing:0.3px">3.09</div><div style="left:720px;top:473px;width:62px;height:27px;color:#333;line-height:27px;text-align:center;white-space:nowrap;letter-spacing:0.3px">3.43</div><div style="left:782px;top:473px;width:35px;height:27px;color:#ff0000;line-height:27px;text-align:center;white-space:nowrap;"><span class="k">勝</span></div><div style="left:818px;top:473px;width:35px;height:27px;color:#ff0000;line-height:27px;text-align:center;white-space:nowrap;"><span class="k">贏</span></div><div style="left:854px;top:473px;width:52px;height:27px;color:#008000;line-height:27px;text-align:center;white-space:nowrap;"><span class="k">小</span></div><div style="left:0px;top:499px;width:907px;height:1px;background:#bebebe"></div><div style="left:0px;top:500px;width:907px;height:27px;background:#f0f0f0"></div><div style="left:0px;top:500px;width:65px;height:27px;background:#0080ff"></div><div style="left:467px;top:500px;width:140px;height:27px;background:#fdf9f5"></div><div style="left:608px;top:500px;width:174px;height:27px;background:#f0f8fc"></div><div style="left:0px;top:501px;width:65px;height:27px;color:#fff;line-height:27px;text-align:center;white-space:nowrap;"><span class="k">意甲</span></div><div style="left:66px;top:501px;width:69px;height:27px;color:#333;line-height:27px;text-align:center;white-space:nowrap;letter-spacing:0.25px">25-08-31</div><div style="left:136px;top:501px;width:112px;height:27px;color:#000;line-height:27px;text-align:center;white-space:nowrap;"><span style="color:#000"><span class="k">那不勒斯</span></span></div><div style="left:249px;top:501px;width:80px;height:27px;color:#333;line-height:27px;text-align:center;white-space:nowrap;letter-spacing:0.3px"><span style="color:#ff0000">1-0</span>(0-0)</div><div style="left:330px;top:501px;width:36px;height:27px;color:#333;line-height:27px;text-align:center;white-space:nowrap;letter-spacing:0.3px">13-0</div><div style="left:367px;top:501px;width:99px;height:27px;color:#000;line-height:27px;text-align:center;white-space:nowrap;"><span style="color:#008000"><span class="k">卡利亚里</span></span></div><div style="left:467px;top:501px;width:37px;height:27px;color:#333;line-height:27px;text-align:center;white-space:nowrap;letter-spacing:0.3px">1.03</div><div style="left:505px;top:501px;width:62px;height:27px;color:#333;line-height:27px;text-align:center;white-space:nowrap;"><span class="k">一</span><span style="padding:0 0.6px">/</span><span class="k">球半</span></div><div style="left:568px;top:501px;width:39px;height:27px;color:#333;line-height:27px;text-align:center;white-space:nowrap;letter-spacing:0.3px">0.86</div><div style="left:608px;top:501px;width:48px;height:27px;color:#333;line-height:27px;text-align:center;white-space:nowrap;letter-spacing:0.3px">1.40</div><div style="left:657px;top:501px;width:62px;height:27px;color:#333;line-height:27px;text-align:center;white-space:nowrap;letter-spacing:0.3px">4.48</div><div style="left:720px;top:501px;width:62px;height:27px;color:#333;line-height:27px;text-align:center;white-space:nowrap;letter-spacing:0.3px">8.52</div><div style="left:782px;top:501px;width:35px;height:27px;color:#008000;line-height:27px;text-align:center;white-space:nowrap;"><span class="k">負</span></div><div style="left:818px;top:501px;width:35px;height:27px;color:#ff0000;line-height:27px;text-align:center;white-space:nowrap;"><span class="k">贏</span></div><div style="left:854px;top:501px;width:52px;height:27px;color:#008000;line-height:27px;text-align:center;white-space:nowrap;"><span class="k">小</span></div><div style="left:0px;top:527px;width:907px;height:1px;background:#bebebe"></div><div style="left:0px;top:528px;width:907px;height:27px;background:#ffffff"></div><div style="left:0px;top:528px;width:65px;height:27px;background:#0080ff"></div><div style="left:467px;top:528px;width:140px;height:27px;background:#fdf9f5"></div><div style="left:608px;top:528px;width:174px;height:27px;background:#f0f8fc"></div><div style="left:0px;top:529px;width:65px;height:27px;color:#fff;line-height:27px;text-align:center;white-space:nowrap;"><span class="k">意甲</span></div><div style="left:66px;top:529px;width:69px;height:27px;color:#333;line-height:27px;text-align:center;white-space:nowrap;letter-spacing:0.25px">25-08-25</div><div style="left:136px;top:529px;width:112px;height:27px;color:#000;line-height:27px;text-align:center;white-space:nowrap;"><span style="color:#008000"><span class="k">卡利亚里</span></span></div><div style="left:249px;top:529px;width:80px;height:27px;color:#333;line-height:27px;text-align:center;white-space:nowrap;letter-spacing:0.3px"><span style="color:#ff0000">1-1</span>(0-0)</div><div style="left:330px;top:529px;width:36px;height:27px;color:#333;line-height:27px;text-align:center;white-space:nowrap;letter-spacing:0.3px">3-2</div><div style="left:367px;top:529px;width:99px;height:27px;color:#000;line-height:27px;text-align:center;white-space:nowrap;"><span style="color:#000"><span class="k">佛罗伦萨</span></span></div><div style="left:467px;top:529px;width:37px;height:27px;color:#333;line-height:27px;text-align:center;white-space:nowrap;letter-spacing:0.3px">0.75</div><div style="left:505px;top:529px;width:62px;height:27px;color:#333;line-height:27px;text-align:center;white-space:nowrap;"><span style="color:red">*</span><span class="k">平</span><span style="padding:0 0.6px">/</span><span class="k">半</span></div><div style="left:568px;top:529px;width:39px;height:27px;color:#333;line-height:27px;text-align:center;white-space:nowrap;letter-spacing:0.3px">1.16</div><div style="left:608px;top:529px;width:48px;height:27px;color:#333;line-height:27px;text-align:center;white-space:nowrap;letter-spacing:0.3px">3.27</div><div style="left:657px;top:529px;width:62px;height:27px;color:#333;line-height:27px;text-align:center;white-space:nowrap;letter-spacing:0.3px">3.17</div><div style="left:720px;top:529px;width:62px;height:27px;color:#333;line-height:27px;text-align:center;white-space:nowrap;letter-spacing:0.3px">2.31</div><div style="left:782px;top:529px;width:35px;height:27px;color:#0000ff;line-height:27px;text-align:center;white-space:nowrap;"><span class="k">平</span></div><div style="left:818px;top:529px;width:35px;height:27px;color:#ff0000;line-height:27px;text-align:center;white-space:nowrap;"><span class="k">贏</span></div><div style="left:854px;top:529px;width:52px;height:27px;color:#008000;line-height:27px;text-align:center;white-space:nowrap;"><span class="k">小</span></div><div style="left:0px;top:555px;width:907px;height:1px;background:#bebebe"></div><div style="left:0px;top:556px;width:907px;height:27px;background:#f0f0f0"></div><div style="left:0px;top:556px;width:65px;height:27px;background:#3c3cff"></div><div style="left:467px;top:556px;width:140px;height:27px;background:#fdf9f5"></div><div style="left:608px;top:556px;width:174px;height:27px;background:#f0f8fc"></div><div style="left:0px;top:557px;width:65px;height:27px;color:#fff;line-height:27px;text-align:center;white-space:nowrap;"><span class="k">意杯</span></div><div style="left:66px;top:557px;width:69px;height:27px;color:#333;line-height:27px;text-align:center;white-space:nowrap;letter-spacing:0.25px">25-08-17</div><div style="left:136px;top:557px;width:112px;height:27px;color:#000;line-height:27px;text-align:center;white-space:nowrap;"><span style="color:#008000"><span class="k">卡利亚里</span></span></div><div style="left:249px;top:557px;width:80px;height:27px;color:#333;line-height:27px;text-align:center;white-space:nowrap;letter-spacing:0.3px"><span style="color:#ff0000">1-1</span>(1-0)</div><div style="left:330px;top:557px;width:36px;height:27px;color:#333;line-height:27px;text-align:center;white-space:nowrap;letter-spacing:0.3px">3-3</div><div style="left:367px;top:557px;width:99px;height:27px;color:#000;line-height:27px;text-align:center;white-space:nowrap;"><span style="color:#000"><span class="k">恩特拉</span></span></div><div style="left:467px;top:557px;width:37px;height:27px;color:#333;line-height:27px;text-align:center;white-space:nowrap;letter-spacing:0.3px">0.85</div><div style="left:505px;top:557px;width:62px;height:27px;color:#333;line-height:27px;text-align:center;white-space:nowrap;"><span class="k">一</span><span style="padding:0 0.6px">/</span><span class="k">球半</span></div><div style="left:568px;top:557px;width:39px;height:27px;color:#333;line-height:27px;text-align:center;white-space:nowrap;letter-spacing:0.3px">1.03</div><div style="left:608px;top:557px;width:48px;height:27px;color:#333;line-height:27px;text-align:center;white-space:nowrap;letter-spacing:0.3px">1.41</div><div style="left:657px;top:557px;width:62px;height:27px;color:#333;line-height:27px;text-align:center;white-space:nowrap;letter-spacing:0.3px">4.48</div><div style="left:720px;top:557px;width:62px;height:27px;color:#333;line-height:27px;text-align:center;white-space:nowrap;letter-spacing:0.3px">7.19</div><div style="left:782px;top:557px;width:35px;height:27px;color:#0000ff;line-height:27px;text-align:center;white-space:nowrap;"><span class="k">平</span></div><div style="left:818px;top:557px;width:35px;height:27px;color:#008000;line-height:27px;text-align:center;white-space:nowrap;"><span class="k">輸</span></div><div style="left:854px;top:557px;width:52px;height:27px;color:#008000;line-height:27px;text-align:center;white-space:nowrap;"><span class="k">小</span></div><div style="left:0px;top:583px;width:907px;height:1px;background:#bebebe"></div><div style="left:0px;top:584px;width:907px;height:27px;background:#ffffff"></div><div style="left:0px;top:584px;width:65px;height:27px;background:#00a39c"></div><div style="left:467px;top:584px;width:140px;height:27px;background:#fdf9f5"></div><div style="left:608px;top:584px;width:174px;height:27px;background:#f0f8fc"></div><div style="left:0px;top:585px;width:65px;height:27px;color:#fff;line-height:27px;text-align:center;white-space:nowrap;"><span class="k">球会友谊</span></div><div style="left:66px;top:585px;width:69px;height:27px;color:#333;line-height:27px;text-align:center;white-space:nowrap;letter-spacing:0.25px">25-08-10</div><div style="left:136px;top:585px;width:112px;height:27px;color:#000;line-height:27px;text-align:center;white-space:nowrap;"><span style="color:#000"><span class="k">桑坦德</span></span></div><div style="left:249px;top:585px;width:80px;height:27px;color:#333;line-height:27px;text-align:center;white-space:nowrap;letter-spacing:0.3px"><span style="color:#ff0000">1-1</span>(0-0)</div><div style="left:330px;top:585px;width:36px;height:27px;color:#333;line-height:27px;text-align:center;white-space:nowrap;letter-spacing:0.3px">7-3</div><div style="left:367px;top:585px;width:99px;height:27px;color:#000;line-height:27px;text-align:center;white-space:nowrap;"><span style="color:#008000"><span class="k">卡利亚里</span></span></div><div style="left:467px;top:585px;width:37px;height:27px;color:#333;line-height:27px;text-align:center;white-space:nowrap;letter-spacing:0.3px"></div><div style="left:505px;top:585px;width:62px;height:27px;color:#333;line-height:27px;text-align:center;white-space:nowrap;"></div><div style="left:568px;top:585px;width:39px;height:27px;color:#333;line-height:27px;text-align:center;white-space:nowrap;letter-spacing:0.3px"></div><div style="left:608px;top:585px;width:48px;height:27px;color:#333;line-height:27px;text-align:center;white-space:nowrap;letter-spacing:0.3px">2.89</div><div style="left:657px;top:585px;width:62px;height:27px;color:#333;line-height:27px;text-align:center;white-space:nowrap;letter-spacing:0.3px">3.16</div><div style="left:720px;top:585px;width:62px;height:27px;color:#333;line-height:27px;text-align:center;white-space:nowrap;letter-spacing:0.3px">2.67</div><div style="left:782px;top:585px;width:35px;height:27px;color:#0000ff;line-height:27px;text-align:center;white-space:nowrap;"><span class="k">平</span></div><div style="left:818px;top:585px;width:35px;height:27px;color:#333;line-height:27px;text-align:center;white-space:nowrap;"></div><div style="left:854px;top:585px;width:52px;height:27px;color:#333;line-height:27px;text-align:center;white-space:nowrap;"></div><div style="left:0px;top:611px;width:907px;height:1px;background:#bebebe"></div><div style="left:0px;top:612px;width:907px;height:27px;background:#f0f0f0"></div><div style="left:0px;top:612px;width:65px;height:27px;background:#00a39c"></div><div style="left:467px;top:612px;width:140px;height:27px;background:#fdf9f5"></div><div style="left:608px;top:612px;width:174px;height:27px;background:#f0f8fc"></div><div style="left:0px;top:613px;width:65px;height:27px;color:#fff;line-height:27px;text-align:center;white-space:nowrap;"><span class="k">球会友谊</span></div><div style="left:66px;top:613px;width:69px;height:27px;color:#333;line-height:27px;text-align:center;white-space:nowrap;letter-spacing:0.25px">25-08-09</div><div style="left:136px;top:613px;width:112px;height:27px;color:#000;line-height:27px;text-align:center;white-space:nowrap;"><span style="color:#000"><span class="k">桑坦德</span><span style="padding:0 1px">(</span><span class="k">中</span><span style="padding:0 1px">)</span></span></div><div style="left:249px;top:613px;width:80px;height:27px;color:#333;line-height:27px;text-align:center;white-space:nowrap;letter-spacing:0.3px"><span style="color:#ff0000">0-0</span>(0-0)</div><div style="left:330px;top:613px;width:36px;height:27px;color:#333;line-height:27px;text-align:center;white-space:nowrap;letter-spacing:0.3px">3-4</div><div style="left:367px;top:613px;width:99px;height:27px;color:#000;line-height:27px;text-align:center;white-space:nowrap;"><span style="color:#008000"><span class="k">卡利亚里</span></span></div><div style="left:467px;top:613px;width:37px;height:27px;color:#333;line-height:27px;text-align:center;white-space:nowrap;letter-spacing:0.3px">1.05</div><div style="left:505px;top:613px;width:62px;height:27px;color:#333;line-height:27px;text-align:center;white-space:nowrap;"><span class="k">平手</span></div><div style="left:568px;top:613px;width:39px;height:27px;color:#333;line-height:27px;text-align:center;white-space:nowrap;letter-spacing:0.3px">0.77</div><div style="left:608px;top:613px;width:48px;height:27px;color:#333;line-height:27px;text-align:center;white-space:nowrap;letter-spacing:0.3px">2.55</div><div style="left:657px;top:613px;width:62px;height:27px;color:#333;line-height:27px;text-align:center;white-space:nowrap;letter-spacing:0.3px">3.26</div><div style="left:720px;top:613px;width:62px;height:27px;color:#333;line-height:27px;text-align:center;white-space:nowrap;letter-spacing:0.3px">2.38</div><div style="left:782px;top:613px;width:35px;height:27px;color:#0000ff;line-height:27px;text-align:center;white-space:nowrap;"><span class="k">平</span></div><div style="left:818px;top:613px;width:35px;height:27px;color:#0000ff;line-height:27px;text-align:center;white-space:nowrap;"><span class="k">走</span></div><div style="left:854px;top:613px;width:52px;height:27px;color:#008000;line-height:27px;text-align:center;white-space:nowrap;"><span class="k">小</span></div><div style="left:0px;top:639px;width:907px;height:1px;background:#bebebe"></div><div style="left:0px;top:640px;width:907px;height:27px;background:#ffffff"></div><div style="left:0px;top:640px;width:65px;height:27px;background:#00a39c"></div><div style="left:467px;top:640px;width:140px;height:27px;background:#fdf9f5"></div><div style="left:608px;top:640px;width:174px;height:27px;background:#f0f8fc"></div><div style="left:0px;top:641px;width:65px;height:27px;color:#fff;line-height:27px;text-align:center;white-space:nowrap;"><span class="k">球会友谊</span></div><div style="left:66px;top:641px;width:69px;height:27px;color:#333;line-height:27px;text-align:center;white-space:nowrap;letter-spacing:0.25px">25-08-03</div><div style="left:136px;top:641px;width:112px;height:27px;color:#000;line-height:27px;text-align:center;white-space:nowrap;"><span style="color:#008000"><span class="k">卡利亚里</span></span></div><div style="left:249px;top:641px;width:80px;height:27px;color:#333;line-height:27px;text-align:center;white-space:nowrap;letter-spacing:0.3px"><span style="color:#ff0000">1-0</span>(1-0)</div><div style="left:330px;top:641px;width:36px;height:27px;color:#333;line-height:27px;text-align:center;white-space:nowrap;letter-spacing:0.3px">7-4</div><div style="left:367px;top:641px;width:99px;height:27px;color:#000;line-height:27px;text-align:center;white-space:nowrap;"><span style="color:#000"><span class="k">圣埃蒂安</span></span></div><div style="left:467px;top:641px;width:37px;height:27px;color:#333;line-height:27px;text-align:center;white-space:nowrap;letter-spacing:0.3px">1.04</div><div style="left:505px;top:641px;width:62px;height:27px;color:#333;line-height:27px;text-align:center;white-space:nowrap;"><span class="k">半球</span></div><div style="left:568px;top:641px;width:39px;height:27px;color:#333;line-height:27px;text-align:center;white-space:nowrap;letter-spacing:0.3px">0.78</div><div style="left:608px;top:641px;width:48px;height:27px;color:#333;line-height:27px;text-align:center;white-space:nowrap;letter-spacing:0.3px">2.01</div><div style="left:657px;top:641px;width:62px;height:27px;color:#333;line-height:27px;text-align:center;white-space:nowrap;letter-spacing:0.3px">3.50</div><div style="left:720px;top:641px;width:62px;height:27px;color:#333;line-height:27px;text-align:center;white-space:nowrap;letter-spacing:0.3px">3.31</div><div style="left:782px;top:641px;width:35px;height:27px;color:#ff0000;line-height:27px;text-align:center;white-space:nowrap;"><span class="k">勝</span></div><div style="left:818px;top:641px;width:35px;height:27px;color:#ff0000;line-height:27px;text-align:center;white-space:nowrap;"><span class="k">贏</span></div><div style="left:854px;top:641px;width:52px;height:27px;color:#008000;line-height:27px;text-align:center;white-space:nowrap;"><span class="k">小</span></div><div style="left:0px;top:667px;width:907px;height:1px;background:#bebebe"></div><div style="left:0px;top:668px;width:907px;height:27px;background:#f0f0f0"></div><div style="left:0px;top:668px;width:65px;height:27px;background:#00a39c"></div><div style="left:467px;top:668px;width:140px;height:27px;background:#fdf9f5"></div><div style="left:608px;top:668px;width:174px;height:27px;background:#f0f8fc"></div><div style="left:0px;top:669px;width:65px;height:27px;color:#fff;line-height:27px;text-align:center;white-space:nowrap;"><span class="k">球会友谊</span></div><div style="left:66px;top:669px;width:69px;height:27px;color:#333;line-height:27px;text-align:center;white-space:nowrap;letter-spacing:0.25px">25-07-26</div><div style="left:136px;top:669px;width:112px;height:27px;color:#000;line-height:27px;text-align:center;white-space:nowrap;"><span style="color:#000"><span class="k">汉诺威</span>96</span></div><div style="left:249px;top:669px;width:80px;height:27px;color:#333;line-height:27px;text-align:center;white-space:nowrap;letter-spacing:0.3px"><span style="color:#ff0000">2-0</span>(1-0)</div><div style="left:330px;top:669px;width:36px;height:27px;color:#333;line-height:27px;text-align:center;white-space:nowrap;letter-spacing:0.3px">6-1</div><div style="left:367px;top:669px;width:99px;height:27px;color:#000;line-height:27px;text-align:center;white-space:nowrap;"><span style="color:#008000"><span class="k">卡利亚里</span></span></div><div style="left:467px;top:669px;width:37px;height:27px;color:#333;line-height:27px;text-align:center;white-space:nowrap;letter-spacing:0.3px">0.87</div><div style="left:505px;top:669px;width:62px;height:27px;color:#333;line-height:27px;text-align:center;white-space:nowrap;"><span class="k">半球</span></div><div style="left:568px;top:669px;width:39px;height:27px;color:#333;line-height:27px;text-align:center;white-space:nowrap;letter-spacing:0.3px">0.89</div><div style="left:608px;top:669px;width:48px;height:27px;color:#333;line-height:27px;text-align:center;white-space:nowrap;letter-spacing:0.3px">1.96</div><div style="left:657px;top:669px;width:62px;height:27px;color:#333;line-height:27px;text-align:center;white-space:nowrap;letter-spacing:0.3px">3.51</div><div style="left:720px;top:669px;width:62px;height:27px;color:#333;line-height:27px;text-align:center;white-space:nowrap;letter-spacing:0.3px">3.41</div><div style="left:782px;top:669px;width:35px;height:27px;color:#008000;line-height:27px;text-align:center;white-space:nowrap;"><span class="k">負</span></div><div style="left:818px;top:669px;width:35px;height:27px;color:#008000;line-height:27px;text-align:center;white-space:nowrap;"><span class="k">輸</span></div><div style="left:854px;top:669px;width:52px;height:27px;color:#008000;line-height:27px;text-align:center;white-space:nowrap;"><span class="k">小</span></div><div style="left:0px;top:695px;width:907px;height:1px;background:#bebebe"></div><div style="left:0px;top:696px;width:907px;height:27px;background:#ffffff"></div><div style="left:0px;top:696px;width:65px;height:27px;background:#00a39c"></div><div style="left:467px;top:696px;width:140px;height:27px;background:#fdf9f5"></div><div style="left:608px;top:696px;width:174px;height:27px;background:#f0f8fc"></div><div style="left:0px;top:697px;width:65px;height:27px;color:#fff;line-height:27px;text-align:center;white-space:nowrap;"><span class="k">球会友谊</span></div><div style="left:66px;top:697px;width:69px;height:27px;color:#333;line-height:27px;text-align:center;white-space:nowrap;letter-spacing:0.25px">25-07-24</div><div style="left:136px;top:697px;width:112px;height:27px;color:#000;line-height:27px;text-align:center;white-space:nowrap;"><span style="color:#000"><span class="k">加拉塔萨雷</span><span style="padding:0 1px">(</span><span class="k">中</span><span style="padding:0 1px">)</span></span></div><div style="left:249px;top:697px;width:80px;height:27px;color:#333;line-height:27px;text-align:center;white-space:nowrap;letter-spacing:0.3px"><span style="color:#ff0000">3-1</span>(2-1)</div><div style="left:330px;top:697px;width:36px;height:27px;color:#333;line-height:27px;text-align:center;white-space:nowrap;letter-spacing:0.3px">1-4</div><div style="left:367px;top:697px;width:99px;height:27px;color:#000;line-height:27px;text-align:center;white-space:nowrap;"><span style="color:#008000"><span class="k">卡利亚里</span></span></div><div style="left:467px;top:697px;width:37px;height:27px;color:#333;line-height:27px;text-align:center;white-space:nowrap;letter-spacing:0.3px">0.90</div><div style="left:505px;top:697px;width:62px;height:27px;color:#333;line-height:27px;text-align:center;white-space:nowrap;"><span class="k">半</span><span style="padding:0 0.6px">/</span><span class="k">一</span></div><div style="left:568px;top:697px;width:39px;height:27px;color:#333;line-height:27px;text-align:center;white-space:nowrap;letter-spacing:0.3px">0.92</div><div style="left:608px;top:697px;width:48px;height:27px;color:#333;line-height:27px;text-align:center;white-space:nowrap;letter-spacing:0.3px">1.71</div><div style="left:657px;top:697px;width:62px;height:27px;color:#333;line-height:27px;text-align:center;white-space:nowrap;letter-spacing:0.3px">4.06</div><div style="left:720px;top:697px;width:62px;height:27px;color:#333;line-height:27px;text-align:center;white-space:nowrap;letter-spacing:0.3px">4.04</div><div style="left:782px;top:697px;width:35px;height:27px;color:#008000;line-height:27px;text-align:center;white-space:nowrap;"><span class="k">負</span></div><div style="left:818px;top:697px;width:35px;height:27px;color:#008000;line-height:27px;text-align:center;white-space:nowrap;"><span class="k">輸</span></div><div style="left:854px;top:697px;width:52px;height:27px;color:#ff0000;line-height:27px;text-align:center;white-space:nowrap;"><span class="k">大</span></div><div style="left:0px;top:723px;width:907px;height:1px;background:#bebebe"></div><div style="left:0px;top:724px;width:907px;height:27px;background:#f0f0f0"></div><div style="left:0px;top:724px;width:65px;height:27px;background:#00a39c"></div><div style="left:467px;top:724px;width:140px;height:27px;background:#fdf9f5"></div><div style="left:608px;top:724px;width:174px;height:27px;background:#f0f8fc"></div><div style="left:0px;top:725px;width:65px;height:27px;color:#fff;line-height:27px;text-align:center;white-space:nowrap;"><span class="k">球会友谊</span></div><div style="left:66px;top:725px;width:69px;height:27px;color:#333;line-height:27px;text-align:center;white-space:nowrap;letter-spacing:0.25px">25-07-19</div><div style="left:136px;top:725px;width:112px;height:27px;color:#000;line-height:27px;text-align:center;white-space:nowrap;"><span style="color:#008000"><span class="k">卡利亚里</span><span style="padding:0 1px">(</span><span class="k">中</span><span style="padding:0 1px">)</span></span></div><div style="left:249px;top:725px;width:80px;height:27px;color:#333;line-height:27px;text-align:center;white-space:nowrap;letter-spacing:0.3px"><span style="color:#ff0000">3-1</span>(3-1)</div><div style="left:330px;top:725px;width:36px;height:27px;color:#333;line-height:27px;text-align:center;white-space:nowrap;letter-spacing:0.3px">8-0</div><div style="left:367px;top:725px;width:99px;height:27px;color:#000;line-height:27px;text-align:center;white-space:nowrap;"><span style="color:#000"><span class="k">奥斯皮塔莱托</span></span></div><div style="left:467px;top:725px;width:37px;height:27px;color:#333;line-height:27px;text-align:center;white-space:nowrap;letter-spacing:0.3px"></div><div style="left:505px;top:725px;width:62px;height:27px;color:#333;line-height:27px;text-align:center;white-space:nowrap;"></div><div style="left:568px;top:725px;width:39px;height:27px;color:#333;line-height:27px;text-align:center;white-space:nowrap;letter-spacing:0.3px"></div><div style="left:608px;top:725px;width:48px;height:27px;color:#333;line-height:27px;text-align:center;white-space:nowrap;letter-spacing:0.3px">1.03</div><div style="left:657px;top:725px;width:62px;height:27px;color:#333;line-height:27px;text-align:center;white-space:nowrap;letter-spacing:0.3px">14.91</div><div style="left:720px;top:725px;width:62px;height:27px;color:#333;line-height:27px;text-align:center;white-space:nowrap;letter-spacing:0.3px">30.27</div><div style="left:782px;top:725px;width:35px;height:27px;color:#ff0000;line-height:27px;text-align:center;white-space:nowrap;"><span class="k">勝</span></div><div style="left:818px;top:725px;width:35px;height:27px;color:#333;line-height:27px;text-align:center;white-space:nowrap;"></div><div style="left:854px;top:725px;width:52px;height:27px;color:#333;line-height:27px;text-align:center;white-space:nowrap;"></div><div style="left:0px;top:751px;width:907px;height:1px;background:#bebebe"></div><div style="left:0px;top:430px;width:907px;height:1px;background:#bebebe"></div><div style="left:0px;top:471px;width:907px;height:1px;background:#bebebe"></div><div style="left:466px;top:453px;width:441px;height:1px;background:#bebebe"></div><div style="left:65px;top:430px;width:1px;height:322px;background:#bebebe"></div><div style="left:135px;top:430px;width:1px;height:322px;background:#bebebe"></div><div style="left:248px;top:430px;width:1px;height:322px;background:#bebebe"></div><div style="left:329px;top:430px;width:1px;height:322px;background:#bebebe"></div><div style="left:366px;top:430px;width:1px;height:322px;background:#bebebe"></div><div style="left:466px;top:430px;width:1px;height:322px;background:#bebebe"></div><div style="left:504px;top:453px;width:1px;height:299px;background:#bebebe"></div><div style="left:567px;top:453px;width:1px;height:299px;background:#bebebe"></div><div style="left:607px;top:430px;width:1px;height:322px;background:#bebebe"></div><div style="left:656px;top:453px;width:1px;height:299px;background:#bebebe"></div><div style="left:719px;top:453px;width:1px;height:299px;background:#bebebe"></div><div style="left:782px;top:430px;width:1px;height:322px;background:#bebebe"></div><div style="left:818px;top:453px;width:1px;height:299px;background:#bebebe"></div><div style="left:854px;top:453px;width:1px;height:299px;background:#bebebe"></div><div style="left:466px;top:57px;width:59px;height:20px;background:#fff;border:1px solid #a6a6a6;border-radius:2px;box-sizing:border-box"></div><div style="left:471px;top:58px;width:200px;height:20px;color:#333;line-height:20px;white-space:nowrap;"><span style="font-size:13px">Crow*</span></div><div style="left:512px;top:64px;width:0px;height:0px;border-left:3px solid transparent;border-right:3px solid transparent;border-top:6px solid #000"></div><div style="left:533px;top:57px;width:36px;height:20px;background:#fff;border:1px solid #a6a6a6;border-radius:2px;box-sizing:border-box"></div><div style="left:538px;top:58px;width:200px;height:20px;color:#333;line-height:20px;white-space:nowrap;"><span class="k">终</span></div><div style="left:555px;top:64px;width:0px;height:0px;border-left:3px solid transparent;border-right:3px solid transparent;border-top:6px solid #000"></div><div style="left:619px;top:57px;width:84px;height:20px;background:#fff;border:1px solid #a6a6a6;border-radius:2px;box-sizing:border-box"></div><div style="left:623px;top:58px;width:200px;height:20px;color:#333;line-height:20px;white-space:nowrap;"><span class="k">胜平负均值</span></div><div style="left:689px;top:64px;width:0px;height:0px;border-left:3px solid transparent;border-right:3px solid transparent;border-top:6px solid #000"></div><div style="left:711px;top:57px;width:36px;height:20px;background:#fff;border:1px solid #a6a6a6;border-radius:2px;box-sizing:border-box"></div><div style="left:716px;top:58px;width:200px;height:20px;color:#333;line-height:20px;white-space:nowrap;"><span class="k">终</span></div><div style="left:734px;top:64px;width:0px;height:0px;border-left:3px solid transparent;border-right:3px solid transparent;border-top:6px solid #000"></div><div style="left:817px;top:57px;width:48px;height:20px;background:#fff;border:1px solid #a6a6a6;border-radius:2px;box-sizing:border-box"></div><div style="left:822px;top:58px;width:200px;height:20px;color:#333;line-height:20px;white-space:nowrap;"><span class="k">全场</span></div><div style="left:852px;top:64px;width:0px;height:0px;border-left:3px solid transparent;border-right:3px solid transparent;border-top:6px solid #000"></div><div style="left:486px;top:432px;width:58px;height:20px;background:#fff;border:1px solid #a6a6a6;border-radius:2px;box-sizing:border-box"></div><div style="left:491px;top:433px;width:200px;height:20px;color:#333;line-height:20px;white-space:nowrap;"><span style="font-size:13px">Crow*</span></div><div style="left:532px;top:439px;width:0px;height:0px;border-left:3px solid transparent;border-right:3px solid transparent;border-top:6px solid #000"></div><div style="left:552px;top:432px;width:36px;height:20px;background:#fff;border:1px solid #a6a6a6;border-radius:2px;box-sizing:border-box"></div><div style="left:557px;top:433px;width:200px;height:20px;color:#333;line-height:20px;white-space:nowrap;"><span class="k">终</span></div><div style="left:574px;top:439px;width:0px;height:0px;border-left:3px solid transparent;border-right:3px solid transparent;border-top:6px solid #000"></div><div style="left:631px;top:432px;width:84px;height:20px;background:#fff;border:1px solid #a6a6a6;border-radius:2px;box-sizing:border-box"></div><div style="left:635px;top:433px;width:200px;height:20px;color:#333;line-height:20px;white-space:nowrap;"><span class="k">胜平负均值</span></div><div style="left:701px;top:439px;width:0px;height:0px;border-left:3px solid transparent;border-right:3px solid transparent;border-top:6px solid #000"></div><div style="left:723px;top:432px;width:36px;height:20px;background:#fff;border:1px solid #a6a6a6;border-radius:2px;box-sizing:border-box"></div><div style="left:728px;top:433px;width:200px;height:20px;color:#333;line-height:20px;white-space:nowrap;"><span class="k">终</span></div><div style="left:746px;top:439px;width:0px;height:0px;border-left:3px solid transparent;border-right:3px solid transparent;border-top:6px solid #000"></div><div style="left:821px;top:432px;width:48px;height:20px;background:#fff;border:1px solid #a6a6a6;border-radius:2px;box-sizing:border-box"></div><div style="left:826px;top:433px;width:200px;height:20px;color:#333;line-height:20px;white-space:nowrap;"><span class="k">全场</span></div><div style="left:856px;top:439px;width:0px;height:0px;border-left:3px solid transparent;border-right:3px solid transparent;border-top:6px solid #000"></div>
</body></html>
